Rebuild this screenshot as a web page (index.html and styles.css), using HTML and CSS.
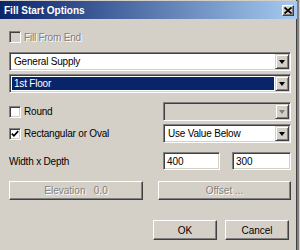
FILE: index.html
```html
<!DOCTYPE html>
<html lang="en">
<head>
    <meta charset="UTF-8">
    <title>Fill Start Options</title>
    <link rel="stylesheet" href="styles.css">
</head>
<body>
    <div class="window">
        <div class="title-bar">
            <span class="title">Fill Start Options</span>
            <span class="close-btn">
                <svg width="8" height="7" viewBox="0 0 8 7">
                    <path d="M0.5 0.5 L7.5 6.5 M7.5 0.5 L0.5 6.5" stroke="#000" stroke-width="1.8"/>
                </svg>
            </span>
        </div>

        <div class="content">
            <div class="check-row first">
                <span class="checkbox disabled"></span>
                <span class="label disabled-text">Fill From End</span>
            </div>

            <div class="combo combo-wide top">
                <span class="combo-text">General Supply</span>
                <span class="combo-btn"><span class="arrow"></span></span>
            </div>
            <div class="combo combo-wide second">
                <span class="combo-text selected">1st Floor</span>
                <span class="combo-btn"><span class="arrow"></span></span>
            </div>

            <div class="form-row round-row">
                <div class="check-row">
                    <span class="checkbox"></span>
                    <span class="label">Round</span>
                </div>
                <div class="combo combo-disabled">
                    <span class="combo-text"></span>
                    <span class="combo-btn"><span class="arrow gray"></span></span>
                </div>
            </div>

            <div class="form-row rect-row">
                <div class="check-row">
                    <span class="checkbox">
                        <svg width="8" height="8" viewBox="0 0 8 8">
                            <polyline points="0.8,3.6 2.9,5.8 7.2,1.2" fill="none" stroke="#000" stroke-width="1.7"/>
                        </svg>
                    </span>
                    <span class="label">Rectangular or Oval</span>
                </div>
                <div class="combo">
                    <span class="combo-text">Use Value Below</span>
                    <span class="combo-btn"><span class="arrow"></span></span>
                </div>
            </div>

            <div class="form-row size-row">
                <span class="label plain">Width x Depth</span>
                <div class="size-inputs">
                    <div class="field">400</div>
                    <div class="field">300</div>
                </div>
            </div>

            <div class="button-row">
                <div class="btn disabled-text">Elevation&nbsp;&nbsp;&nbsp;0.0</div>
                <div class="btn disabled-text">Offset ...</div>
            </div>

            <div class="dialog-buttons">
                <div class="btn">OK</div>
                <div class="btn">Cancel</div>
            </div>
        </div>
    </div>
</body>
</html>
```

FILE: styles.css
```css
body {
    margin: 0;
    font-family: 'Liberation Sans', Arial, sans-serif;
    font-size: 10px;
    color: #000;
    background: #d4d0c8;
}
.window {
    width: 300px;
    height: 250px;
    box-sizing: border-box;
    background: #d4d0c8;
    padding-top: 1px;
    border-right: 1px solid #d4d0c8;
    box-shadow: inset -2px 0 #808080, inset -3px 0 #404040;
    overflow: hidden;
}
.title-bar {
    width: 297px;
    height: 18px;
    display: flex;
    align-items: center;
    justify-content: space-between;
    background: linear-gradient(to right, #0a246a, #a6caf0);
    box-sizing: border-box;
    padding: 0 3px 0 4px;
}
.title {
    color: #fff;
    font-weight: bold;
    font-size: 10px;
}
.close-btn {
    width: 12px;
    height: 11px;
    box-sizing: border-box;
    display: flex;
    align-items: center;
    justify-content: center;
    background: #d4d0c8;
    border: 1px solid;
    border-color: #fff #404040 #404040 #fff;
    box-shadow: inset -1px -1px #808080;
}
.content {
    width: 282px;
    margin-left: 9px;
}
.check-row {
    display: flex;
    align-items: center;
    height: 12px;
}
.check-row.first {
    margin-top: 12px;
}
.checkbox {
    width: 12px;
    height: 12px;
    box-sizing: border-box;
    background: #fff;
    border: 1px solid;
    border-color: #808080 #fff #fff #808080;
    box-shadow: inset 1px 1px #404040, inset -1px -1px #d4d0c8;
    display: flex;
    align-items: center;
    justify-content: center;
}
.checkbox.disabled {
    background: #d4d0c8;
}
.label {
    margin-left: 3px;
    letter-spacing: -0.2px;
}
.label.plain {
    margin-left: 0;
}
.disabled-text {
    color: #808080;
    text-shadow: 1px 1px #fff;
}
.combo {
    height: 19px;
    box-sizing: border-box;
    display: flex;
    align-items: stretch;
    background: #fff;
    border: 1px solid;
    border-color: #808080 #fff #fff #808080;
    box-shadow: inset 1px 1px #404040, inset -1px -1px #d4d0c8;
    padding: 1px;
}
.combo-wide.top {
    margin-top: 9px;
}
.combo-wide.second {
    margin-top: 3px;
}
.combo-disabled {
    background: #d4d0c8;
}
.combo-text {
    flex: 1;
    display: flex;
    align-items: center;
    padding-left: 2px;
    margin: 1px;
    letter-spacing: -0.2px;
}
.combo-text.selected {
    background: #0a246a;
    color: #fff;
}
.combo-btn {
    width: 14px;
    box-sizing: border-box;
    display: flex;
    align-items: center;
    justify-content: center;
    background: #d4d0c8;
    border: 1px solid;
    border-color: #d4d0c8 #404040 #404040 #d4d0c8;
    box-shadow: inset 1px 1px #fff, inset -1px -1px #808080;
}
.arrow {
    width: 0;
    height: 0;
    border-left: 3px solid transparent;
    border-right: 3px solid transparent;
    border-top: 4px solid #000;
}
.arrow.gray {
    border-top-color: #808080;
}
.form-row {
    display: grid;
    grid-template-columns: 154px 128px;
    align-items: center;
}
.round-row {
    margin-top: 9px;
}
.rect-row {
    margin-top: 3px;
}
.size-row {
    margin-top: 9px;
}
.size-inputs {
    display: grid;
    grid-template-columns: 57px 59px;
    gap: 12px;
}
.field {
    height: 18px;
    box-sizing: border-box;
    background: #fff;
    border: 1px solid;
    border-color: #808080 #fff #fff #808080;
    box-shadow: inset 1px 1px #404040, inset -1px -1px #d4d0c8;
    padding-left: 3px;
    display: flex;
    align-items: center;
}
.btn {
    height: 19px;
    box-sizing: border-box;
    display: flex;
    align-items: center;
    justify-content: center;
    background: #d4d0c8;
    border: 1px solid;
    border-color: #fff #404040 #404040 #fff;
    box-shadow: inset -1px -1px #808080;
}
.button-row {
    display: grid;
    grid-template-columns: 134px 133px;
    justify-content: space-between;
    margin-top: 11px;
}
.dialog-buttons {
    display: flex;
    justify-content: flex-end;
    gap: 8px;
    margin-top: 20px;
    padding-right: 2px;
}
.dialog-buttons .btn {
    width: 64px;
    height: 20px;
}
```
